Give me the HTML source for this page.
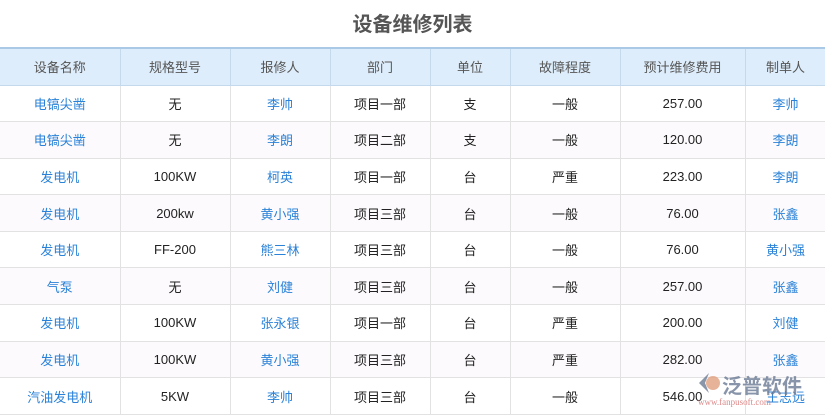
<html><head><style>
body{margin:0;width:825px;height:416px;overflow:hidden;background:#fff;font-family:"Liberation Sans","Noto Sans CJK SC",sans-serif;position:relative}
h1{margin:0;position:absolute;top:8px;left:0;width:825px;text-align:center;font-size:20px;color:#555;font-weight:bold}
table{position:absolute;top:47px;left:0;border-collapse:collapse;table-layout:fixed;width:826px;font-size:13px}
td,th{border:1px solid #e2e2e2;text-align:center;height:36.6px;padding:0;color:#222;font-weight:normal}
th{background:#deedfb;color:#555;border-color:#c4d9ec;height:37px}
tr:first-child th{border-top:2px solid #a9c9e6}
tr:nth-child(odd) td{background:#fcfafc}
.b{color:#2a82d8}
td:first-child,th:first-child{border-left:none}
.wm{position:absolute;left:696px;top:370px;font-size:20px;color:#6b7a94;font-weight:bold;opacity:.8}
.wm2{position:absolute;left:698px;top:397px;font-size:9px;color:#d88;font-family:"Liberation Serif",serif}
</style></head><body>
<h1>设备维修列表</h1>
<table>
<colgroup><col width="120"><col width="110"><col width="100"><col width="100"><col width="80"><col width="110"><col width="125"><col width="81"></colgroup>
<tr><th>设备名称</th><th>规格型号</th><th>报修人</th><th>部门</th><th>单位</th><th>故障程度</th><th>预计维修费用</th><th>制单人</th></tr>
<tr><td class="b">电镐尖凿</td><td>无</td><td class="b">李帅</td><td>项目一部</td><td>支</td><td>一般</td><td>257.00</td><td class="b">李帅</td></tr>
<tr><td class="b">电镐尖凿</td><td>无</td><td class="b">李朗</td><td>项目二部</td><td>支</td><td>一般</td><td>120.00</td><td class="b">李朗</td></tr>
<tr><td class="b">发电机</td><td>100KW</td><td class="b">柯英</td><td>项目一部</td><td>台</td><td>严重</td><td>223.00</td><td class="b">李朗</td></tr>
<tr><td class="b">发电机</td><td>200kw</td><td class="b">黄小强</td><td>项目三部</td><td>台</td><td>一般</td><td>76.00</td><td class="b">张鑫</td></tr>
<tr><td class="b">发电机</td><td>FF-200</td><td class="b">熊三林</td><td>项目三部</td><td>台</td><td>一般</td><td>76.00</td><td class="b">黄小强</td></tr>
<tr><td class="b">气泵</td><td>无</td><td class="b">刘健</td><td>项目三部</td><td>台</td><td>一般</td><td>257.00</td><td class="b">张鑫</td></tr>
<tr><td class="b">发电机</td><td>100KW</td><td class="b">张永银</td><td>项目一部</td><td>台</td><td>严重</td><td>200.00</td><td class="b">刘健</td></tr>
<tr><td class="b">发电机</td><td>100KW</td><td class="b">黄小强</td><td>项目三部</td><td>台</td><td>严重</td><td>282.00</td><td class="b">张鑫</td></tr>
<tr><td class="b">汽油发电机</td><td>5KW</td><td class="b">李帅</td><td>项目三部</td><td>台</td><td>一般</td><td>546.00</td><td class="b">王志远</td></tr>
</table>
<svg style="position:absolute;left:697px;top:372px" width="24" height="22"><path d="M12 1 L2 11 L12 21 L8 11Z" fill="#6b7a94" opacity=".8"/><circle cx="16" cy="11" r="7" fill="#e0a080" opacity=".8"/></svg>
<div class="wm" style="left:722px">泛普软件</div>
<div class="wm2">www.fanpusoft.com</div>
</body></html>
